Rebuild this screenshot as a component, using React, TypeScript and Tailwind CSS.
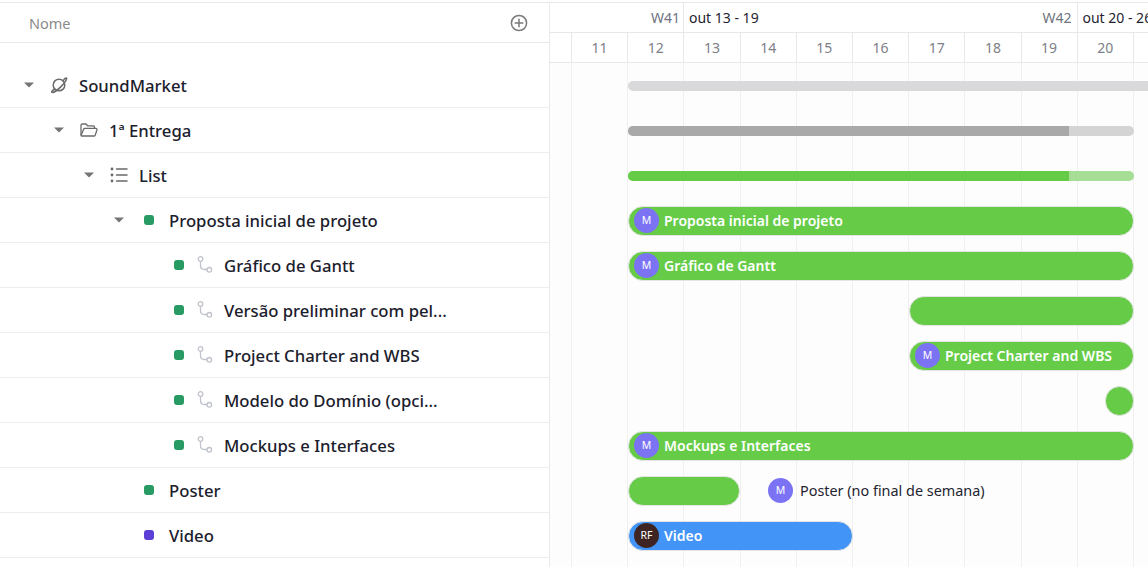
import React from "react";

function Tri() {
  return (
    <svg width="10" height="6" viewBox="0 0 10 6" className="shrink-0">
      <path d="M0 0.5 H10 L5 5.5 Z" fill="#757575" />
    </svg>
  );
}

function Planet() {
  return (
    <svg width="18" height="18" viewBox="0 0 18 18" fill="none" stroke="#6a6a6a" strokeWidth="1.5" strokeLinecap="round" strokeLinejoin="round">
      <circle cx="9" cy="9" r="5.8" />
      <path d="M13.2 4.6 C14.2 3 15.6 1.6 16.4 2 C17.4 2.6 15 6.6 11 10.6 C7 14.6 2.8 17 1.8 16.2 C1.2 15.6 2.8 14 4.6 13" />
    </svg>
  );
}

function FolderOpen() {
  return (
    <svg width="18" height="14" viewBox="0 0 18 14" fill="none" stroke="#6a6a6a" strokeWidth="1.3" strokeLinejoin="round">
      <path d="M1 12 V2.2 C1 1.5 1.5 1 2.2 1 H6 L7.6 2.8 H13.4 C14 2.8 14.5 3.3 14.5 3.9 V5.4" />
      <path d="M1 12.6 L3.6 6.2 C3.8 5.7 4.2 5.4 4.8 5.4 H16 C16.7 5.4 17.2 6 17 6.7 L15.2 12.2 C15 12.7 14.6 13 14 13 H1.6 Z" />
    </svg>
  );
}

function ListIco() {
  return (
    <svg width="18" height="16" viewBox="0 0 18 16" fill="none" stroke="#6a6a6a" strokeWidth="1.5" strokeLinecap="round">
      <path d="M6.5 2 H17 M6.5 8 H17 M6.5 14 H17" />
      <circle cx="2" cy="2" r="1.4" fill="#6a6a6a" stroke="none" />
      <circle cx="2" cy="8" r="1.4" fill="#6a6a6a" stroke="none" />
      <circle cx="2" cy="14" r="1.4" fill="#6a6a6a" stroke="none" />
    </svg>
  );
}

function Sub() {
  return (
    <svg width="16" height="18" viewBox="0 0 16 18" fill="none" stroke="#c0c3cb" strokeWidth="1.3" className="shrink-0">
      <circle cx="3.5" cy="3" r="2.3" />
      <path d="M3.5 5.3 V9.5 C3.5 12 5 13.5 7.5 13.5 H10" />
      <circle cx="12.3" cy="13.8" r="2.3" />
    </svg>
  );
}

function PlusCircle() {
  return (
    <svg width="18" height="18" viewBox="0 0 18 18" fill="none" stroke="#7a7a7a" strokeWidth="1.5" strokeLinecap="round">
      <circle cx="9" cy="9" r="7.6" />
      <path d="M9 5.2 V12.8 M5.2 9 H12.8" />
    </svg>
  );
}

function Dot({ color }: { color: string }) {
  return <span className={`block w-[10px] h-[10px] rounded-[3px] shrink-0 ${color}`} />;
}

function Row({ level, tri, icon, text }: { level: number; tri?: boolean; icon: React.ReactNode; text: string }) {
  const pl = ["pl-[24px]", "pl-[54px]", "pl-[84px]", "pl-[114px]"][level];
  return (
    <div className={`h-[45px] border-b border-[#ededed] flex items-center ${pl}`}>
      <div className="w-[10px] flex justify-center">{tri && <Tri />}</div>
      <div className="w-[45px] pl-[10px] shrink-0">
        <div className="w-[30px] flex justify-center">{icon}</div>
      </div>
      <span className="pt-[2px] text-[#1b202c] text-[16.7px] font-medium whitespace-nowrap">{text}</span>
    </div>
  );
}

function SubRow({ text }: { text: string }) {
  return (
    <div className="h-[45px] border-b border-[#ededed] flex items-center pl-[174px]">
      <Dot color="bg-[#279b63]" />
      <div className="ml-[13px] mr-[11px] w-[16px]"><Sub /></div>
      <span className="pt-[2px] text-[#1b202c] text-[16.7px] font-medium whitespace-nowrap">{text}</span>
    </div>
  );
}

function Avatar({ label, dark }: { label: string; dark?: boolean }) {
  return (
    <span className={`w-[25px] h-[25px] rounded-full shrink-0 flex items-center justify-center text-[10.5px] text-white ${dark ? "bg-[#3e2523]" : "bg-[#7c73f4]"}`}>
      {label}
    </span>
  );
}

function Bar({ cls, label, av, dark }: { cls: string; label?: string; av?: boolean; dark?: boolean }) {
  return (
    <div className={`h-[30px] rounded-[15px] border border-[#e4e4e4] flex items-center pl-[5px] ${cls}`}>
      {av && <Avatar label={dark ? "RF" : "M"} dark={dark} />}
      {label && <span className="ml-[5px] text-white text-[14px] font-semibold whitespace-nowrap">{label}</span>}
    </div>
  );
}

function ChartRow({ children }: { children?: React.ReactNode }) {
  return <div className="h-[45px] flex items-center">{children}</div>;
}

const dayCols = Array.from({ length: 11 });
const days = ["11", "12", "13", "14", "15", "16", "17", "18", "19", "20"];

export default function App() {
  return (
    <div className="w-[1148px] h-[567px] overflow-hidden bg-white pt-[2px] flex" style={{ fontFamily: '"Noto Sans", sans-serif' }}>
      <div className="w-[550px] shrink-0 border-r border-[#ebebeb]">
        <div className="h-[41px] border-y border-[#e8e8e8] flex items-center justify-between pl-[29px] pr-[21px]">
          <span className="pt-[2px] text-[#8a8a8a] text-[14.5px]">Nome</span>
          <PlusCircle />
        </div>
        <div className="pt-[20px]">
          <Row level={0} tri icon={<Planet />} text="SoundMarket" />
          <Row level={1} tri icon={<FolderOpen />} text="1ª Entrega" />
          <Row level={2} tri icon={<ListIco />} text="List" />
          <Row level={3} tri icon={<Dot color="bg-[#279b63]" />} text="Proposta inicial de projeto" />
          <SubRow text="Gráfico de Gantt" />
          <SubRow text="Versão preliminar com pel..." />
          <SubRow text="Project Charter and WBS" />
          <SubRow text="Modelo do Domínio (opci..." />
          <SubRow text="Mockups e Interfaces" />
          <Row level={3} icon={<Dot color="bg-[#279b63]" />} text="Poster" />
          <Row level={3} icon={<Dot color="bg-[#5b3fd6]" />} text="Video" />
        </div>
      </div>
      <div className="flex-1 min-w-0 overflow-hidden">
        <div className="h-[31px] border-y border-[#e8e8e8] flex items-center text-[14px]">
          <div className="w-[134px] h-full shrink-0 flex items-center justify-end pr-[3px] border-r border-[#e8e8e8] text-[#6f7480]">W41</div>
          <div className="w-[393.5px] h-full shrink-0 flex items-center justify-between border-r border-[#e8e8e8] pl-[5px] pr-[5px]">
            <span className="text-[#1f2430]">out 13 - 19</span>
            <span className="text-[#6f7480]">W42</span>
          </div>
          <span className="pl-[5px] text-[#1f2430] whitespace-nowrap">out 20 - 26</span>
        </div>
        <div className="h-[30px] border-b border-[#e8e8e8] flex text-[14px] text-[#7d8088]">
          <div className="w-[22px] shrink-0 border-r border-[#e8e8e8]" />
          {days.map((d) => (
            <div key={d} className="w-[56.2px] shrink-0 border-r border-[#e8e8e8] flex items-center justify-center">{d}</div>
          ))}
        </div>
        <div className="relative h-[505px] bg-[#fdfdfd]">
          <div className="absolute inset-0 flex">
            <div className="w-[22px] shrink-0 border-r border-[#f0f0f0]" />
            {dayCols.map((_, i) => (
              <div key={i} className="w-[56.2px] shrink-0 border-r border-[#f0f0f0]" />
            ))}
          </div>
          <div className="relative pl-[78px]">
            <ChartRow>
              <div className="h-[10px] w-[600px] rounded-l-[5px] bg-[#d9d9db]" />
            </ChartRow>
            <ChartRow>
              <div className="h-[10px] w-[506px] rounded-[5px] bg-[#d4d4d4] overflow-hidden">
                <div className="h-full w-[441px] bg-[#a9a9a9]" />
              </div>
            </ChartRow>
            <ChartRow>
              <div className="h-[10px] w-[506px] rounded-[5px] bg-[#a7de95] overflow-hidden">
                <div className="h-full w-[441px] bg-[#66cc48]" />
              </div>
            </ChartRow>
            <ChartRow><Bar cls="w-[506px] bg-[#66cc48]" av label="Proposta inicial de projeto" /></ChartRow>
            <ChartRow><Bar cls="w-[506px] bg-[#66cc48]" av label="Gráfico de Gantt" /></ChartRow>
            <ChartRow><Bar cls="w-[225px] ml-[281px] bg-[#66cc48]" /></ChartRow>
            <ChartRow><Bar cls="w-[225px] ml-[281px] bg-[#66cc48]" av label="Project Charter and WBS" /></ChartRow>
            <ChartRow><Bar cls="w-[29px] ml-[477px] bg-[#66cc48]" /></ChartRow>
            <ChartRow><Bar cls="w-[506px] bg-[#66cc48]" av label="Mockups e Interfaces" /></ChartRow>
            <ChartRow>
              <Bar cls="w-[112px] bg-[#66cc48]" />
              <div className="ml-[28px] flex items-center">
                <Avatar label="M" />
                <span className="ml-[7px] text-[14.4px] text-[#1f2430] whitespace-nowrap">Poster (no final de semana)</span>
              </div>
            </ChartRow>
            <ChartRow><Bar cls="w-[225px] bg-[#4295f7]" av dark label="Video" /></ChartRow>
          </div>
        </div>
      </div>
    </div>
  );
}
